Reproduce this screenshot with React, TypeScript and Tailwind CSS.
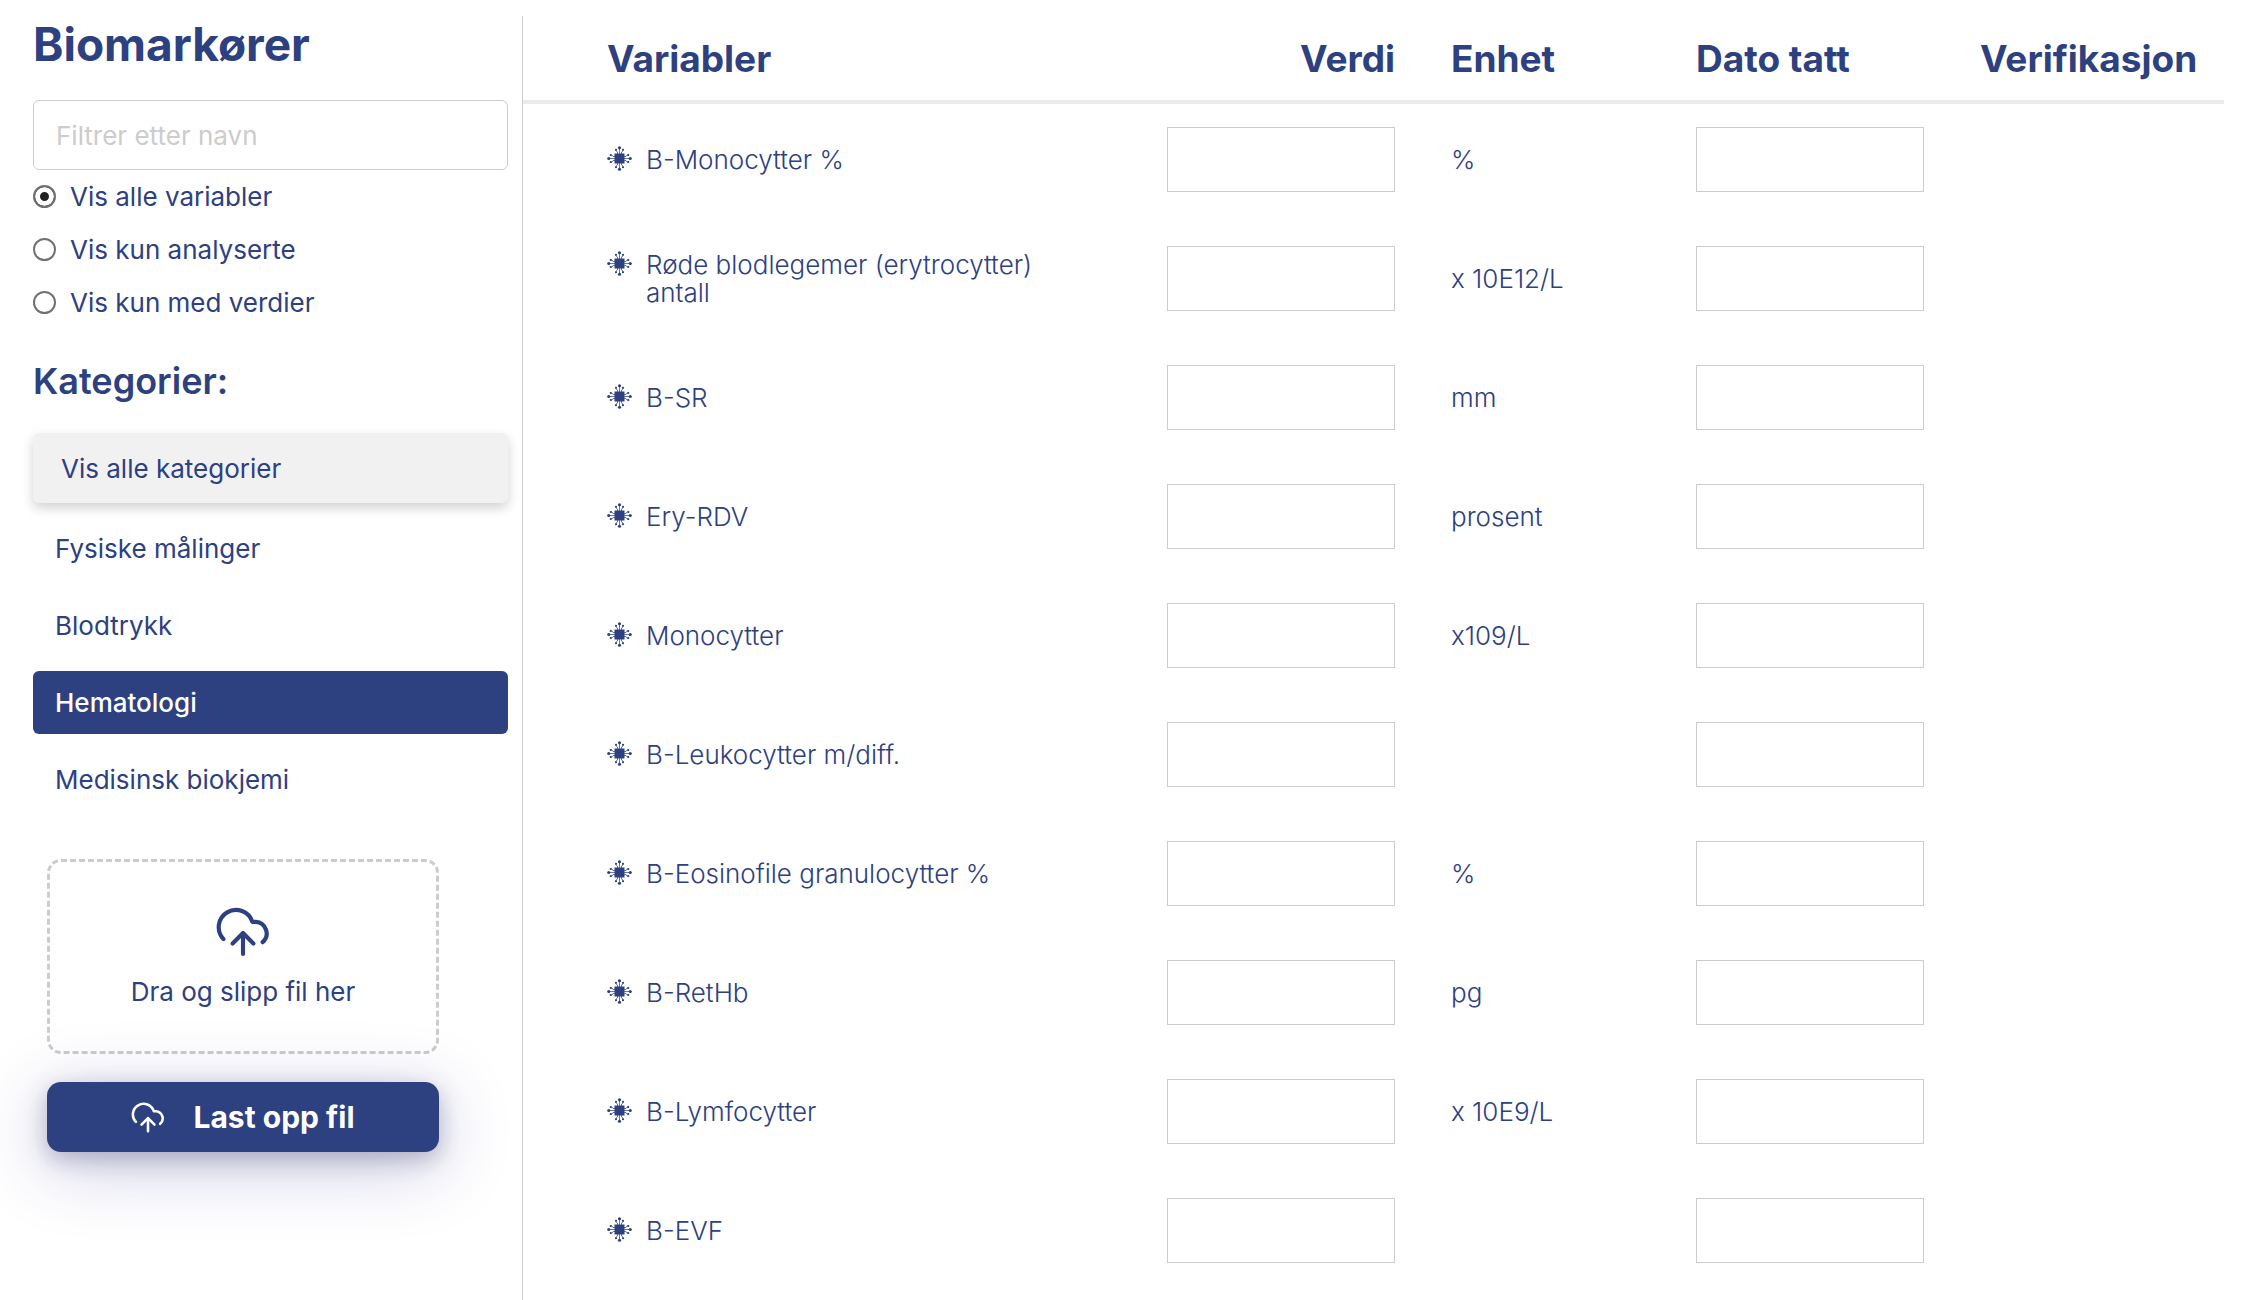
import React, { useState } from 'react';

const filters = ['Vis alle variabler', 'Vis kun analyserte', 'Vis kun med verdier'];

const categories = ['Fysiske målinger', 'Blodtrykk', 'Hematologi', 'Medisinsk biokjemi'];

const variables = [
  { name: 'B-Monocytter %', unit: '%' },
  { name: 'Røde blodlegemer (erytrocytter) antall', unit: 'x 10E12/L' },
  { name: 'B-SR', unit: 'mm' },
  { name: 'Ery-RDV', unit: 'prosent' },
  { name: 'Monocytter', unit: 'x109/L' },
  { name: 'B-Leukocytter m/diff.', unit: '' },
  { name: 'B-Eosinofile granulocytter %', unit: '%' },
  { name: 'B-RetHb', unit: 'pg' },
  { name: 'B-Lymfocytter', unit: 'x 10E9/L' },
  { name: 'B-EVF', unit: '' },
];

const CloudIcon = ({ className }: { className: string }) => (
  <svg
    className={className}
    viewBox="17 18 52 48"
    fill="none"
    stroke="currentColor"
    strokeWidth="4"
    strokeLinecap="round"
    strokeLinejoin="round"
    aria-hidden="true"
  >
    <path d="M24.2 48.8A16.6 16.6 0 1 1 52 32.2H55.3A11.2 11.2 0 0 1 61.9 51.8" />
    <path d="M43 63.2V43M33 53l10-10 10 10" />
  </svg>
);

// One side of the chip; the other three are the same pins rotated
const ChipPins = ({ rotate }: { rotate: number }) => (
  <g transform={`rotate(${rotate} 25 25)`}>
    <path d="M25 16V4M21 16v-4l-3-2V7M29 16v-4l3-2V7" fill="none" stroke="currentColor" strokeWidth="1.4" />
    <circle cx="25" cy="3.5" r="3.2" fill="currentColor" />
    <circle cx="18" cy="7.5" r="2.2" fill="currentColor" />
    <circle cx="32" cy="7.5" r="2.2" fill="currentColor" />
  </g>
);

const ChipIcon = () => (
  <svg className="h-[25px] w-[25px] shrink-0" viewBox="0 0 50 50" aria-hidden="true">
    <ChipPins rotate={0} />
    <ChipPins rotate={90} />
    <ChipPins rotate={180} />
    <ChipPins rotate={270} />
    <rect x="15" y="15" width="20" height="20" fill="currentColor" />
  </svg>
);

const Sidebar = () => {
  const [filter, setFilter] = useState(filters[0]);
  const [category, setCategory] = useState('Hematologi');

  return (
    <aside className="flex w-[490px] shrink-0 flex-col border-r border-[#cccccc] pr-[14px]">
      <h1 className="text-[46px] leading-[56px] font-bold">Biomarkører</h1>
      <input
        type="text"
        aria-label="Filtrer etter navn"
        placeholder="Filtrer etter navn"
        className="mt-7 h-[70px] w-full rounded-md border border-[#cccccc] px-[22px] text-[26px] placeholder:text-[#cccccc]"
      />

      <div>
        {filters.map((label) => (
          <label key={label} className="flex h-[53px] items-center gap-[14px] text-[26px]">
            <input
              type="radio"
              name="filter"
              checked={filter === label}
              onChange={() => setFilter(label)}
              className="h-[23px] w-[23px] appearance-none rounded-full border-2 border-[#707070] checked:bg-[#222222] checked:shadow-[inset_0_0_0_5px_#ffffff]"
            />
            {label}
          </label>
        ))}
      </div>

      <h2 className="mt-8 text-[36px] leading-[40px] font-semibold">Kategorier:</h2>
      <div className="mt-8 flex flex-col gap-[14px] text-[26px]">
        <button
          type="button"
          className="h-[70px] rounded-md bg-[#f1f1f1] px-7 text-left shadow-[0_5px_12px_rgba(0,0,0,0.18)]"
          onClick={() => setCategory('')}
        >
          Vis alle kategorier
        </button>
        {categories.map((name) => (
          <button
            key={name}
            type="button"
            onClick={() => setCategory(name)}
            className={
              name === category
                ? 'h-[63px] rounded-md bg-[#2d4080] px-[22px] text-left font-medium text-white'
                : 'h-[63px] rounded-md px-[22px] text-left'
            }
          >
            {name}
          </button>
        ))}
      </div>

      <div className="mt-12 mr-[69px] ml-[14px] flex flex-col gap-7">
        <div className="flex h-[195px] flex-col items-center justify-center gap-5 rounded-[14px] border-3 border-dashed border-[#cccccc]">
          <CloudIcon className="h-[50px] w-[54px]" />
          <p className="text-[26px] leading-[30px]">Dra og slipp fil her</p>
        </div>
        <button
          type="button"
          className="flex h-[70px] items-center justify-center gap-7 rounded-[14px] bg-[#2d4080] text-[30px] font-bold text-white shadow-[0_14px_70px_rgba(50,50,150,0.28),0_7px_22px_rgba(20,20,60,0.25)]"
        >
          <CloudIcon className="h-[31px] w-[34px]" />
          Last opp fil
        </button>
      </div>
    </aside>
  );
};

const VariableTable = () => (
  <main className="min-w-0 flex-1">
    <table className="w-full table-fixed border-collapse text-left">
      <thead>
        <tr className="h-[84px] text-[37px] leading-[44px] shadow-[0_4px_0_#ebebeb]">
          <th className="pt-0.5 pl-[84px] font-bold">Variabler</th>
          <th className="w-[284px] px-7 pt-0.5 text-right font-bold">Verdi</th>
          <th className="w-[245px] px-7 pt-0.5 font-bold">Enhet</th>
          <th className="w-[284px] px-7 pt-0.5 font-bold">Dato tatt</th>
          <th className="w-[272px] pt-0.5 pl-7 font-bold">Verifikasjon</th>
        </tr>
      </thead>
      <tbody className="text-[26px] leading-7 font-light">
        {variables.map(({ name, unit }) => (
          <tr key={name} className="h-[119px]">
            <td className="pl-[84px]">
              <div className="flex items-start gap-[14px]">
                <ChipIcon />
                <span className="max-w-[440px]">{name}</span>
              </div>
            </td>
            <td className="px-7">
              <input type="text" aria-label={`${name} verdi`} className="h-[65px] w-full border border-[#cccccc] px-4 align-middle" />
            </td>
            <td className="px-7">{unit}</td>
            <td className="px-7">
              <input type="text" aria-label={`${name} dato tatt`} className="h-[65px] w-full border border-[#cccccc] px-4 align-middle" />
            </td>
            <td />
          </tr>
        ))}
      </tbody>
    </table>
  </main>
);

export default function App() {
  return (
    <div className="flex h-screen overflow-hidden bg-white pt-4 pr-[41px] pl-[33px] font-['Inter',sans-serif] text-[#2d4080]">
      <Sidebar />
      <VariableTable />
    </div>
  );
}
